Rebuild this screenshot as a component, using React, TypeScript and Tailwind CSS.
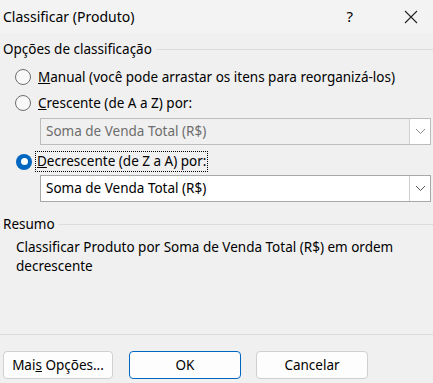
import React from "react";

const font = { fontFamily: '"Noto Sans", "Open Sans", sans-serif' };

function Radio({ checked }: { checked?: boolean }) {
  if (checked) {
    return (
      <span className="w-4 h-4 rounded-full bg-[#0067c0] flex items-center justify-center shrink-0">
        <span className="w-[7px] h-[7px] rounded-full bg-white" />
      </span>
    );
  }
  return <span className="w-4 h-4 rounded-full border border-[#6e6e6e] bg-[#f8f8f8] shrink-0" />;
}

function Chevron({ color }: { color: string }) {
  return (
    <svg width="11" height="7" viewBox="0 0 11 7">
      <path d="M1 1 L5.5 5.5 L10 1" fill="none" stroke={color} strokeWidth="1" />
    </svg>
  );
}

function Select({ disabled }: { disabled?: boolean }) {
  return (
    <div
      className={`ml-[40px] mr-[2px] h-[27px] flex items-stretch border ${
        disabled ? "border-[#bcbcbc] bg-[#f0f0f0]" : "border-[#a8a8a8] bg-white"
      }`}
    >
      <div
        className={`flex-1 flex items-center pl-[5px] text-[13.5px] ${
          disabled ? "text-[#6d6d6d]" : "text-black"
        }`}
      >
        Soma de Venda Total (R$)
      </div>
      <div className="w-[21px] bg-white border-l border-[#cfcfcf] flex items-center justify-center">
        <Chevron color={disabled ? "#8a8a8a" : "#555"} />
      </div>
    </div>
  );
}

export default function App() {
  return (
    <div style={font} className="w-[433px] h-[383px] bg-[#f0f0f0] flex flex-col text-black overflow-hidden text-[13.5px]">
      <div className="h-[33px] flex items-center pl-[3px] bg-[#f3f3f3]">
        <span className="text-[14px]">Classificar (Produto)</span>
        <span className="ml-auto text-[15px] mr-[51px]">?</span>
        <svg width="14" height="14" viewBox="0 0 14 14" className="mr-[15px]">
          <path d="M1 1 L13 13 M13 1 L1 13" stroke="#222" strokeWidth="1.1" />
        </svg>
      </div>

      <div className="mt-[6px] h-[20px] flex items-center pl-[3px]">
        <span>Opções de classificação</span>
        <span className="flex-1 ml-[4px] h-px bg-[#dcdcdc]" />
      </div>

      <div className="mt-[8px] h-[20px] flex items-center pl-[15px]">
        <Radio />
        <span className="ml-[7px]">
          <span className="underline">M</span>anual (você pode arrastar os itens para reorganizá-los)
        </span>
      </div>

      <div className="mt-[6px] h-[20px] flex items-center pl-[15px]">
        <Radio />
        <span className="ml-[7px]">
          <span className="underline">C</span>rescente (de A a Z) por:
        </span>
      </div>

      <div className="mt-[5px]">
        <Select disabled />
      </div>

      <div className="mt-[6px] h-[21px] flex items-center pl-[16px]">
        <Radio checked />
        <span className="ml-[3px] h-[21px] flex items-center px-[1px] border border-dotted border-black">
          <span className="underline">D</span>ecrescente (de Z a A) por:
        </span>
      </div>

      <div className="mt-[3px]">
        <Select />
      </div>

      <div className="mt-[12px] h-[20px] flex items-center pl-[3px]">
        <span>Resumo</span>
        <span className="flex-1 ml-[4px] h-px bg-[#dcdcdc]" />
      </div>

      <div className="mt-[4px] pl-[16px] pr-[20px] leading-[19px]">
        Classificar Produto por Soma de Venda Total (R$) em ordem
        <br />
        decrescente
      </div>

      <div className="mt-auto border-t border-[#dcdcdc] pt-[16px] pb-[4px] flex pl-[3px]">
        <button className="w-[110px] h-[28px] rounded-[4px] border border-[#d0d0d0] bg-[#fdfdfd]">
          Mai<span className="underline">s</span> Opções...
        </button>
        <button className="ml-[16px] w-[112px] h-[28px] rounded-[4px] border border-[#0067c0] bg-[#fdfdfd]">
          OK
        </button>
        <button className="ml-[15px] w-[112px] h-[28px] rounded-[4px] border border-[#d0d0d0] bg-[#fdfdfd]">
          Cancelar
        </button>
      </div>
    </div>
  );
}
